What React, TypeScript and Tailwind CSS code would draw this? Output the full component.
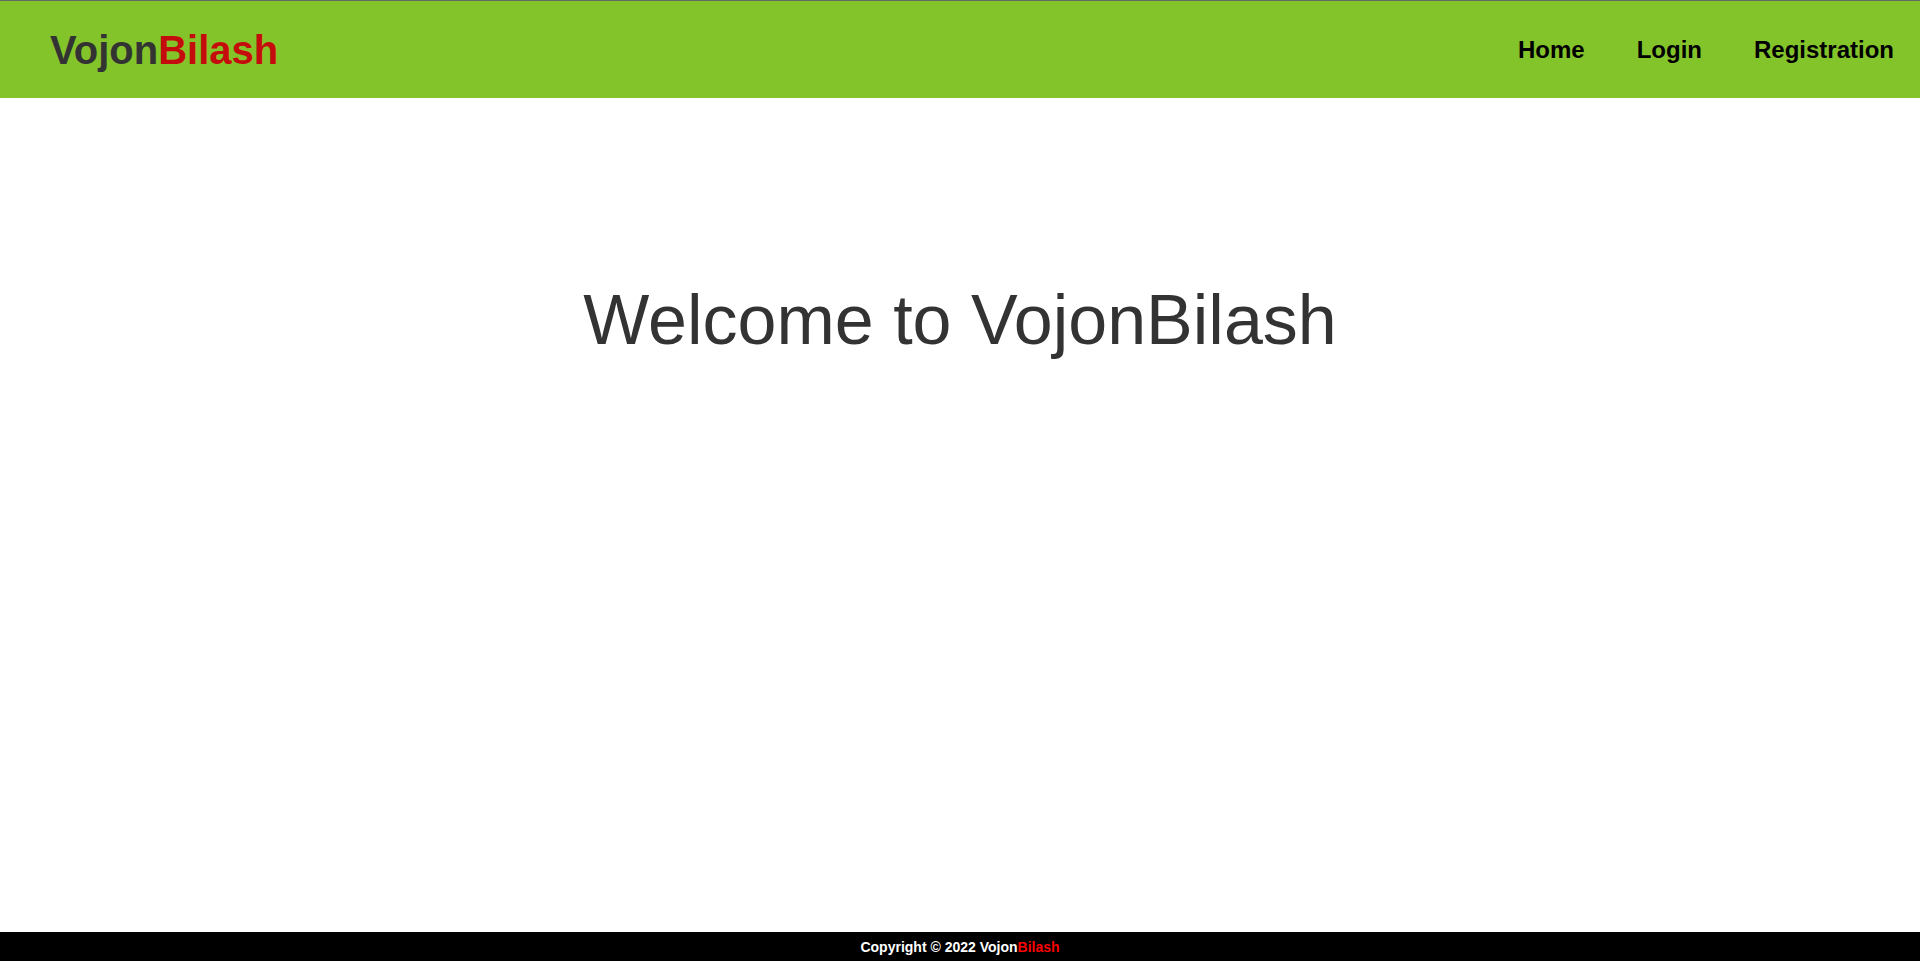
const links = ["Home", "Login", "Registration"];

export default function App() {
  return (
    <div className="min-h-screen flex flex-col bg-white font-['Liberation_Sans',Arial,sans-serif]">
      <header className="h-[98px] border-t border-[#666] bg-[#84c42b] flex items-center justify-between pl-[50px]">
        <h1 className="text-[40px] font-bold leading-none">
          <span className="text-[#333]">Vojon</span>
          <span className="text-[#c40c0c]">Bilash</span>
        </h1>
        <nav className="flex">
          {links.map((l) => (
            <a key={l} href="#" className="px-[26px] text-[24px] font-bold text-black">
              {l}
            </a>
          ))}
        </nav>
      </header>

      <main className="flex-1 pt-[170px]">
        <h2 className="text-center text-[70px] text-[#333] leading-normal">Welcome to VojonBilash</h2>
      </main>

      <footer className="h-[29px] bg-black flex items-center justify-center">
        <p className="text-[14px] font-bold text-white translate-y-[1px]">
          Copyright © 2022 Vojon<span className="text-[#f00]">Bilash</span>
        </p>
      </footer>
    </div>
  );
}
